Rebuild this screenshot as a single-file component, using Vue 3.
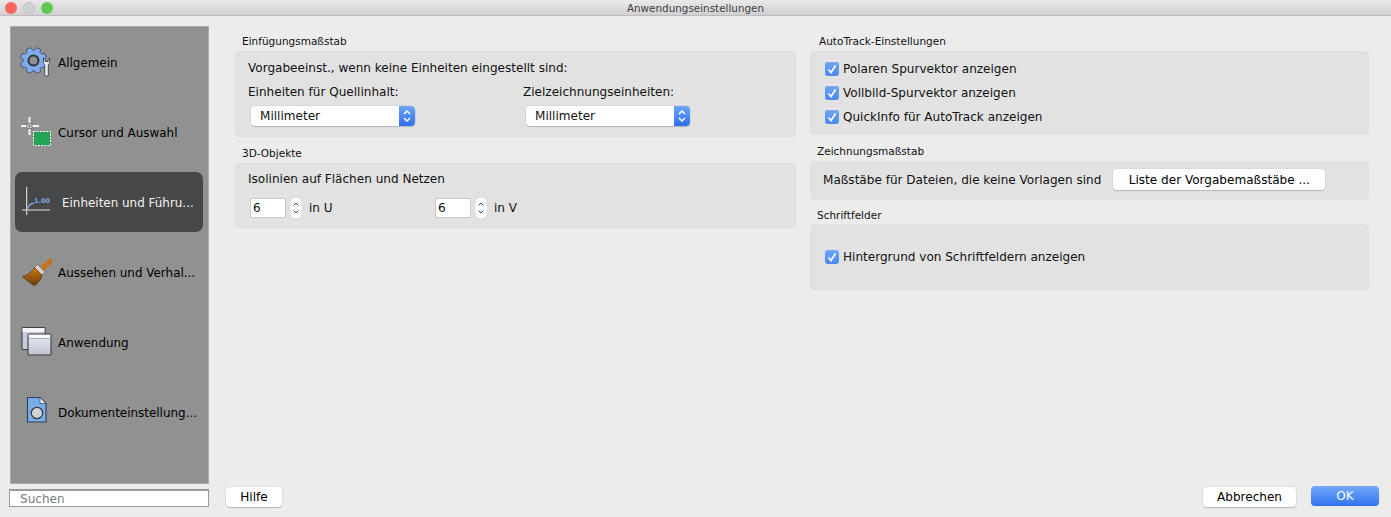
<script setup>
const gearPath = (() => {
  const cx = 13.5, cy = 14.5, teeth = 8, ro = 13.2, ri = 10.4
  const pts = []
  for (let i = 0; i < teeth; i++) {
    const a = (i * 2 * Math.PI) / teeth + Math.PI / 8
    const s = (2 * Math.PI) / teeth
    const add = (r, t) => pts.push(`${(cx + r * Math.cos(t)).toFixed(2)} ${(cy + r * Math.sin(t)).toFixed(2)}`)
    add(ri, a - s * 0.38)
    add(ro, a - s * 0.22)
    add(ro, a + s * 0.22)
    add(ri, a + s * 0.38)
  }
  return 'M' + pts.join('L') + 'Z'
})()

const navItems = [
  { id: 'gear', label: 'Allgemein' },
  { id: 'cursor', label: 'Cursor und Auswahl' },
  { id: 'units', label: 'Einheiten und Führu...', active: true },
  { id: 'brush', label: 'Aussehen und Verhal...' },
  { id: 'windows', label: 'Anwendung' },
  { id: 'doc', label: 'Dokumenteinstellung...' }
]
const autoTrack = ['Polaren Spurvektor anzeigen', 'Vollbild-Spurvektor anzeigen', 'QuickInfo für AutoTrack anzeigen']
const selects = [
  { label: 'Einheiten für Quellinhalt:', value: 'Millimeter' },
  { label: 'Zielzeichnungseinheiten:', value: 'Millimeter' }
]
const spins = [
  { value: '6', unit: 'in U' },
  { value: '6', unit: 'in V' }
]
</script>

<template>
  <div class="window">
    <header class="titlebar">
      <div class="lights">
        <span class="light red"></span>
        <span class="light grey"></span>
        <span class="light green"></span>
      </div>
      <span class="title">Anwendungseinstellungen</span>
    </header>

    <div class="body">
      <aside class="side">
        <nav class="nav">
          <div v-for="item in navItems" :key="item.id" class="nav-item" :class="{ active: item.active }">
            <svg class="nav-icon" viewBox="0 0 32 32" width="32" height="32">
              <defs>
                <linearGradient id="brushHair" x1="0" y1="0" x2="0" y2="1">
                  <stop offset="0" stop-color="#d07a10" />
                  <stop offset="1" stop-color="#6b3c10" />
                </linearGradient>
                <linearGradient id="winFill" x1="0" y1="0" x2="0" y2="1">
                  <stop offset="0" stop-color="#eef0f6" />
                  <stop offset="1" stop-color="#bcc2d2" />
                </linearGradient>
              </defs>
              <template v-if="item.id === 'gear'">
                <path :d="gearPath" fill="#7fabec" stroke="#47566c" stroke-width="1" stroke-linejoin="round" />
                <circle cx="13.500" cy="14.500" r="5" fill="#8f8f8f" stroke="#30353c" stroke-width="2" />
                <path d="M23.500 12v4.500c0 1 .5 1.700 1.200 2.100V29c0 .8.900 1 1.800 1s1.800-.2 1.800-1V18.600c.8-.4 1.400-1.200 1.400-2.100V12l-1.600 1.500v2h-2.900v-2z" fill="#e8ebf0" stroke="#3a3f46" stroke-width=".9" stroke-linejoin="round" />
              </template>
              <template v-else-if="item.id === 'cursor'">
                <path d="M9.500 1v18M1 10h18" stroke="#f0f0f0" stroke-width="2" />
                <rect x="7" y="7.500" width="5" height="5" fill="#d8d8d8" stroke="#6a6a6a" stroke-width=".8" />
                <path d="M9.500 7.500v5M7 10h5" stroke="#6a6a6a" stroke-width=".6" />
                <rect x="13.500" y="15.500" width="17" height="14" fill="#23a455" stroke="#fff" stroke-dasharray="2 1.200" />
              </template>
              <template v-else-if="item.id === 'units'">
                <path d="M6.700 1v28M2 24h28" stroke="#dfe3e8" stroke-width="1.100" fill="none" />
                <path d="M7 24c1-4 3-6.500 7-7" stroke="#7ba6e2" stroke-width="1.300" fill="none" />
                <text x="14" y="17" class="chart-num">1.00</text>
              </template>
              <template v-else-if="item.id === 'brush'">
                <path d="M30.500 5L22 13" stroke="#c9701a" stroke-width="5" stroke-linecap="round" />
                <path d="M17.500 8.500L25 16l-3.500 3.500L14 12z" fill="#d6d3cc" stroke="#6b6459" stroke-width=".7" />
                <path d="M14.500 11.500L22 19c-1 5-4 8-7.500 10.500C11 28 7 24.500 2.500 20.500 7 19.500 12 16 14.500 11.500z" fill="url(#brushHair)" stroke="#4d3218" stroke-width=".7" />
              </template>
              <template v-else-if="item.id === 'windows'">
                <rect x="2" y="1.500" width="23" height="22" rx="1" fill="#c9cddb" stroke="#3b3f47" stroke-width="1.100" />
                <rect x="2.500" y="2" width="22" height="4" fill="#f4f4f6" />
                <rect x="8" y="8" width="23" height="21" rx="1" fill="url(#winFill)" stroke="#3b3f47" stroke-width="1.100" />
                <rect x="8.500" y="8.500" width="22" height="4" fill="#f8f8fa" stroke="#6a6e76" stroke-width=".5" />
              </template>
              <template v-else>
                <path d="M7.500 1.500h12.500l6 6v18.500h-18.500z" fill="#79ade8" stroke="#2f3f55" stroke-width="1.100" stroke-linejoin="round" />
                <path d="M20 1.500v6h6z" fill="#f1f4f8" stroke="#2f3f55" stroke-width=".7" />
                <circle cx="17" cy="17" r="5.700" fill="#cfd2d6" stroke="#33383f" stroke-width="1.200" />
              </template>
            </svg>
            <span class="nav-label">{{ item.label }}</span>
          </div>
        </nav>
        <input class="search" type="text" placeholder="Suchen" />
      </aside>

      <main class="main">
        <div class="columns">
          <div class="column left">
            <section class="section">
              <h2 class="heading">Einfügungsmaßstab</h2>
              <div class="panel insert">
                <p class="line">Vorgabeeinst., wenn keine Einheiten eingestellt sind:</p>
                <div class="select-row">
                  <div v-for="(s, i) in selects" :key="i" class="select-col">
                    <label class="line">{{ s.label }}</label>
                    <div class="select">
                      <span class="select-value">{{ s.value }}</span>
                      <span class="select-arrows">
                        <svg viewBox="0 0 16 20" width="16" height="20">
                          <path d="M5 8l3-3 3 3M5 12l3 3 3-3" fill="none" stroke="#fff" stroke-width="1.500" />
                        </svg>
                      </span>
                    </div>
                  </div>
                </div>
              </div>
            </section>
            <section class="section">
              <h2 class="heading">3D-Objekte</h2>
              <div class="panel iso">
                <p class="line">Isolinien auf Flächen und Netzen</p>
                <div class="spin-row">
                  <div v-for="(s, i) in spins" :key="i" class="spin-group">
                    <input class="num" type="text" :value="s.value" />
                    <span class="stepper">
                      <svg viewBox="0 0 12 22" width="12" height="22">
                        <path d="M3.500 8.500L6 6l2.500 2.500M3.500 13.500L6 16l2.500-2.500" fill="none" stroke="#444" stroke-width="1" />
                      </svg>
                    </span>
                    <span class="unit">{{ s.unit }}</span>
                  </div>
                </div>
              </div>
            </section>
          </div>

          <div class="column right">
            <section class="section">
              <h2 class="heading r1">AutoTrack-Einstellungen</h2>
              <div class="panel track">
                <div v-for="t in autoTrack" :key="t" class="check-row">
                  <span class="check">
                    <svg viewBox="0 0 14 14" width="14" height="14">
                      <path d="M3.500 7.500L6 10.500l4.500-7" fill="none" stroke="#fff" stroke-width="1.700" />
                    </svg>
                  </span>
                  <span>{{ t }}</span>
                </div>
              </div>
            </section>
            <section class="section">
              <h2 class="heading">Zeichnungsmaßstab</h2>
              <div class="panel scale">
                <span>Maßstäbe für Dateien, die keine Vorlagen sind</span>
                <button class="btn list-btn" type="button">Liste der Vorgabemaßstäbe ...</button>
              </div>
            </section>
            <section class="section">
              <h2 class="heading tight">Schriftfelder</h2>
              <div class="panel fields">
                <div class="check-row">
                  <span class="check">
                    <svg viewBox="0 0 14 14" width="14" height="14">
                      <path d="M3.500 7.500L6 10.500l4.500-7" fill="none" stroke="#fff" stroke-width="1.700" />
                    </svg>
                  </span>
                  <span>Hintergrund von Schriftfeldern anzeigen</span>
                </div>
              </div>
            </section>
          </div>
        </div>

        <footer class="footer">
          <button class="btn help" type="button">Hilfe</button>
          <div class="actions">
            <button class="btn cancel" type="button">Abbrechen</button>
            <button class="btn ok" type="button">OK</button>
          </div>
        </footer>
      </main>
    </div>
  </div>
</template>

<style scoped>
.window {
  width: 1391px;
  height: 517px;
  display: flex;
  flex-direction: column;
  overflow: hidden;
  background: #ececec;
  color: #111;
  font-family: "DejaVu Sans", sans-serif;
  font-size: 12.050px;
}
.titlebar {
  height: 16px;
  flex: none;
  position: relative;
  display: flex;
  align-items: center;
  justify-content: center;
  background: linear-gradient(#e9e7e9, #d2d0d2);
  border-bottom: 1px solid #bdbbbd;
  box-sizing: border-box;
}
.lights {
  position: absolute;
  left: 5px;
  top: 0;
  display: flex;
  gap: 6px;
  align-items: center;
  height: 15px;
}
.light {
  width: 12px;
  height: 12px;
  border-radius: 50%;
}
.red { background: #f5675e; }
.grey { background: #d1cfd0; border: 1px solid #c4c2c3; box-sizing: border-box; }
.green { background: #5fc94d; }
.title {
  font-size: 10.400px;
  color: #404040;
}
.body {
  flex: 1;
  min-height: 0;
  display: flex;
  padding: 10px 12px 10px 9px;
}
.side {
  width: 200px;
  flex: none;
  display: flex;
  flex-direction: column;
  gap: 5px;
}
.nav {
  flex: 1;
  margin-left: 1px;
  box-sizing: border-box;
  background: #919191;
  border: 1px solid #ababab;
  padding: 5px 5px 0 4px;
  display: flex;
  flex-direction: column;
  gap: 10px;
}
.nav-item {
  height: 60px;
  display: flex;
  align-items: center;
  gap: 6px;
  padding-left: 5px;
  border-radius: 7px;
  color: #000;
  font-size: 11.950px;
}
.nav-item.active {
  background: #474747;
  color: #f2f2f2;
  gap: 10px;
}
.nav-icon {
  flex: none;
}
.nav-label {
  white-space: nowrap;
  overflow: hidden;
  padding-top: 2px;
}
.chart-num {
  font-family: "DejaVu Sans", sans-serif;
  font-size: 6.500px;
  font-weight: 700;
  fill: #7ba6e2;
}
.search {
  height: 18px;
  width: 200px;
  box-sizing: border-box;
  border: 1px solid #9a9a9a;
  border-top-width: 2px;
  background: #fff;
  padding: 0 0 0 10px;
  margin: 0;
  font: inherit;
  outline: none;
}
.search::placeholder {
  color: #7d7d7d;
  opacity: 1;
}
.main {
  flex: 1;
  min-width: 0;
  display: flex;
  flex-direction: column;
  margin-left: 17px;
}
.columns {
  flex: 1;
  display: flex;
  gap: 14px;
  padding: 8px 0 0 9px;
}
.column {
  display: flex;
  flex-direction: column;
  gap: 9px;
}
.column.left { width: 561px; }
.column.right { width: 559px; }
.heading {
  margin: 0 0 3px 7px;
  height: 14px;
  line-height: 14px;
  font-size: 10.500px;
  font-weight: 400;
}
.heading.r1 { margin-left: 9px; }
.heading.tight { margin-top: -1px; margin-bottom: 2px; }
.panel {
  box-sizing: border-box;
  background: #e2e2e2;
  border: 1px solid #dfdfdf;
  border-radius: 4px;
}
.line {
  display: block;
  margin: 0;
  height: 16px;
  line-height: 16px;
}
.insert {
  height: 86px;
  padding: 8px 12px 0;
}
.select-row {
  display: flex;
  margin-top: 8px;
}
.select-col {
  flex: none;
  width: 275px;
}
.select {
  width: 164px;
  height: 20px;
  margin: 6px 0 0 3px;
  display: flex;
  background: #fff;
  border-radius: 4px;
  box-shadow: 0 1px 1px #b5b5b5, 0 0 0 .5px #d0d0d0;
  overflow: hidden;
}
.select-value {
  flex: 1;
  line-height: 21px;
  padding-left: 9px;
}
.select-arrows {
  width: 16px;
  height: 20px;
  background: linear-gradient(#6ea6f8, #2f6eee);
}
.select-arrows svg { display: block; }
.iso {
  height: 65px;
  padding: 7px 12px 0;
}
.spin-row {
  display: flex;
  margin-top: 10px;
  padding-left: 2px;
}
.spin-group {
  width: 185px;
  display: flex;
  align-items: center;
}
.num {
  width: 36px;
  height: 20px;
  box-sizing: border-box;
  border: 1px solid #c9c9c9;
  background: #fff;
  padding: 0 0 0 2px;
  margin: 0;
  font: inherit;
  color: #111;
  outline: none;
}
.stepper {
  width: 12px;
  height: 22px;
  margin: 0 7px 0 4px;
  background: #fff;
  border-radius: 6px;
  box-shadow: 0 0 1px #9c9c9c;
}
.stepper svg { display: block; }
.track {
  height: 84px;
  padding: 8px 0 0 14px;
  display: flex;
  flex-direction: column;
  gap: 6px;
}
.check-row {
  height: 18px;
  display: flex;
  align-items: center;
  gap: 4px;
}
.check {
  width: 14px;
  height: 14px;
  border-radius: 3px;
  background: linear-gradient(#70a6f5, #4a88ee);
}
.check svg { display: block; }
.scale {
  height: 39px;
  padding: 0 0 2px 12px;
  display: flex;
  align-items: center;
  gap: 12px;
}
.fields {
  height: 66px;
  padding-left: 14px;
  display: flex;
  align-items: center;
}
.btn {
  box-sizing: border-box;
  border: none;
  border-radius: 4px;
  background: #fff;
  box-shadow: 0 1px 1px #b8b8b8, 0 0 0 .5px #d4d4d4;
  font: inherit;
  color: #000;
  padding: 0;
  height: 20px;
}
.list-btn {
  width: 212px;
  height: 21px;
}
.footer {
  display: flex;
  justify-content: space-between;
  align-items: flex-start;
  height: 21px;
}
.help { width: 56px; margin-top: 1px; }
.actions {
  display: flex;
  gap: 15px;
  align-items: flex-start;
}
.cancel { width: 93px; margin-top: 1px; }
.ok {
  width: 68px;
  background: linear-gradient(#74a9f8, #2f73f2);
  color: #fff;
  box-shadow: none;
}
</style>
